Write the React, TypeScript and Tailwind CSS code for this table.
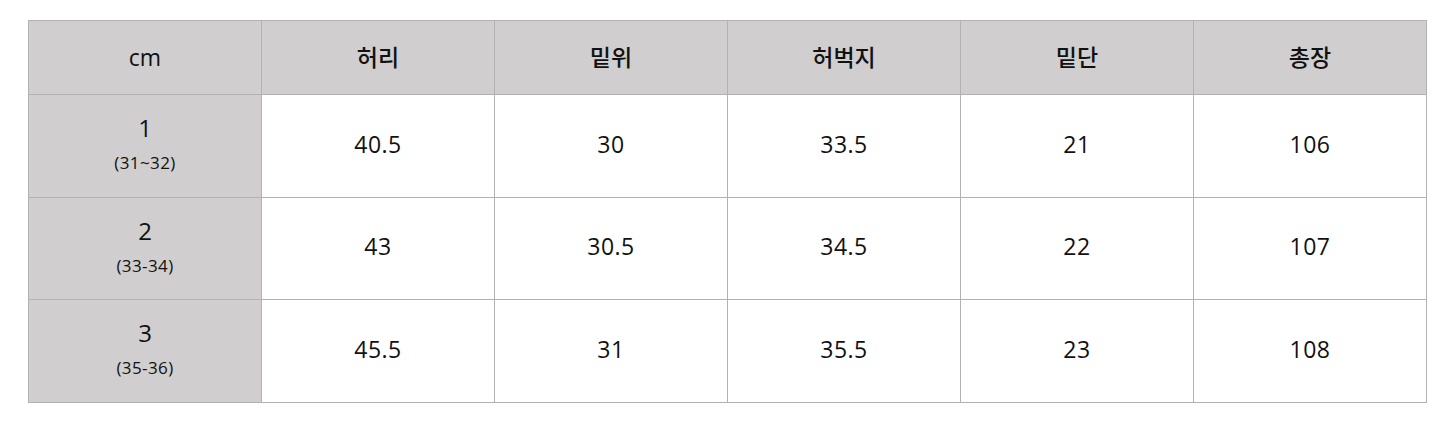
const headers = ['허리', '밑위', '허벅지', '밑단', '총장']

const rows = [
  { size: '1', range: '(31~32)', height: 'h-[103px]', values: ['40.5', '30', '33.5', '21', '106'] },
  { size: '2', range: '(33-34)', height: 'h-[102px]', values: ['43', '30.5', '34.5', '22', '107'] },
  { size: '3', range: '(35-36)', height: 'h-[103px]', values: ['45.5', '31', '35.5', '23', '108'] },
]

export default function App() {
  return (
    <div className="w-[1452px] h-[421px] bg-white pt-[20px] pl-[28px] font-['Open_Sans','Noto_Sans_CJK_KR',sans-serif] text-[#111]">
      <table className="border-collapse table-fixed w-[1399px]">
        <thead>
          <tr className="h-[74px] bg-[#d0cecf]">
            <th className="w-[233px] border border-[#b2b2b2] text-[23px] font-normal text-center align-middle">
              cm
            </th>
            {headers.map((h) => (
              <th
                key={h}
                className="w-[233px] border border-[#b2b2b2] text-[23px] font-medium text-center align-middle"
              >
                {h}
              </th>
            ))}
          </tr>
        </thead>
        <tbody>
          {rows.map((row) => (
            <tr key={row.size} className={row.height}>
              <td className="border border-[#b2b2b2] bg-[#d0cecf] text-center align-middle pb-[5px]">
                <div className="text-[24px] leading-[30px]">{row.size}</div>
                <div className="text-[17px] leading-[22px] mt-[9px] tracking-[0.4px]">{row.range}</div>
              </td>
              {row.values.map((v, i) => (
                <td
                  key={i}
                  className="border border-[#b2b2b2] text-[23px] text-center align-middle tracking-[0.5px] pb-[4px]"
                >
                  {v}
                </td>
              ))}
            </tr>
          ))}
        </tbody>
      </table>
    </div>
  )
}
